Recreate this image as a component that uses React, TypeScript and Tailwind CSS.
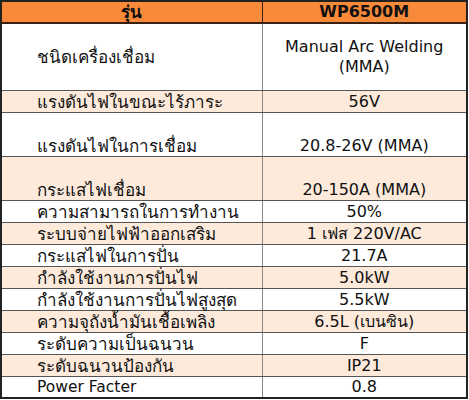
const rows: { label: string; value: string[]; h: string; align: string; shade: boolean; thai: boolean }[] = [
    { label: "ชนิดเครื่องเชื่อม", value: ["Manual Arc Welding", "(MMA)"], h: "h-[67px]", align: "align-middle", shade: false, thai: true },
    { label: "แรงดันไฟในขณะไร้ภาระ", value: ["56V"], h: "h-[22px]", align: "align-bottom", shade: true, thai: true },
    { label: "แรงดันไฟในการเชื่อม", value: ["20.8-26V (MMA)"], h: "h-[44px]", align: "align-bottom", shade: false, thai: true },
    { label: "กระแสไฟเชื่อม", value: ["20-150A (MMA)"], h: "h-[44px]", align: "align-bottom", shade: true, thai: true },
    { label: "ความสามารถในการทำงาน", value: ["50%"], h: "h-[22px]", align: "align-bottom", shade: false, thai: true },
    { label: "ระบบจ่ายไฟฟ้าออกเสริม", value: ["1 เฟส 220V/AC"], h: "h-[22px]", align: "align-bottom", shade: true, thai: true },
    { label: "กระแสไฟในการปั่น", value: ["21.7A"], h: "h-[22px]", align: "align-bottom", shade: false, thai: true },
    { label: "กำลังใช้งานการปั่นไฟ", value: ["5.0kW"], h: "h-[22px]", align: "align-bottom", shade: true, thai: true },
    { label: "กำลังใช้งานการปั่นไฟสูงสุด", value: ["5.5kW"], h: "h-[22px]", align: "align-bottom", shade: false, thai: true },
    { label: "ความจุถังน้ำมันเชื้อเพลิง", value: ["6.5L (เบนซิน)"], h: "h-[22px]", align: "align-bottom", shade: true, thai: true },
    { label: "ระดับความเป็นฉนวน", value: ["F"], h: "h-[22px]", align: "align-bottom", shade: false, thai: true },
    { label: "ระดับฉนวนป้องกัน", value: ["IP21"], h: "h-[22px]", align: "align-bottom", shade: true, thai: true },
    { label: "Power Facter", value: ["0.8"], h: "h-[22px]", align: "align-bottom", shade: false, thai: false },
];

function App() {
    return (
        <div className="w-[469px] h-[400px] bg-white text-[16px] text-[#111] leading-[20px]" style={{ fontFamily: '"DejaVu Sans", "Noto Sans", sans-serif' }}>
            <table className="w-[468px] border-collapse border-2 border-[#222] table-fixed">
                <colgroup>
                    <col className="w-[261px]" />
                    <col />
                </colgroup>
                <thead>
                    <tr className="h-[22px] bg-[#f98a3a]">
                        <th className="p-0 font-bold text-[17px] text-center border-r border-b-2 border-[#3a2010]">รุ่น</th>
                        <th className="p-0 font-bold text-center border-b-2 border-[#3a2010]">WP6500M</th>
                    </tr>
                </thead>
                <tbody>
                    {rows.map((r, i) => (
                        <tr key={i} className={`${r.h} ${r.shade ? "bg-[#fdeadb]" : "bg-white"}`}>
                            <td className={`p-0 pl-[35px] whitespace-nowrap border-b border-r border-b-[#555] border-r-[#888] ${r.thai ? "text-[17px]" : "text-[15.5px]"} ${r.align}`}>{r.label}</td>
                            <td className={`p-0 text-center border-b border-b-[#555] ${r.align}`}>
                                {r.value.map((v, j) => (
                                    <div key={j}>{v}</div>
                                ))}
                            </td>
                        </tr>
                    ))}
                </tbody>
            </table>
        </div>
    );
}

export default App;
